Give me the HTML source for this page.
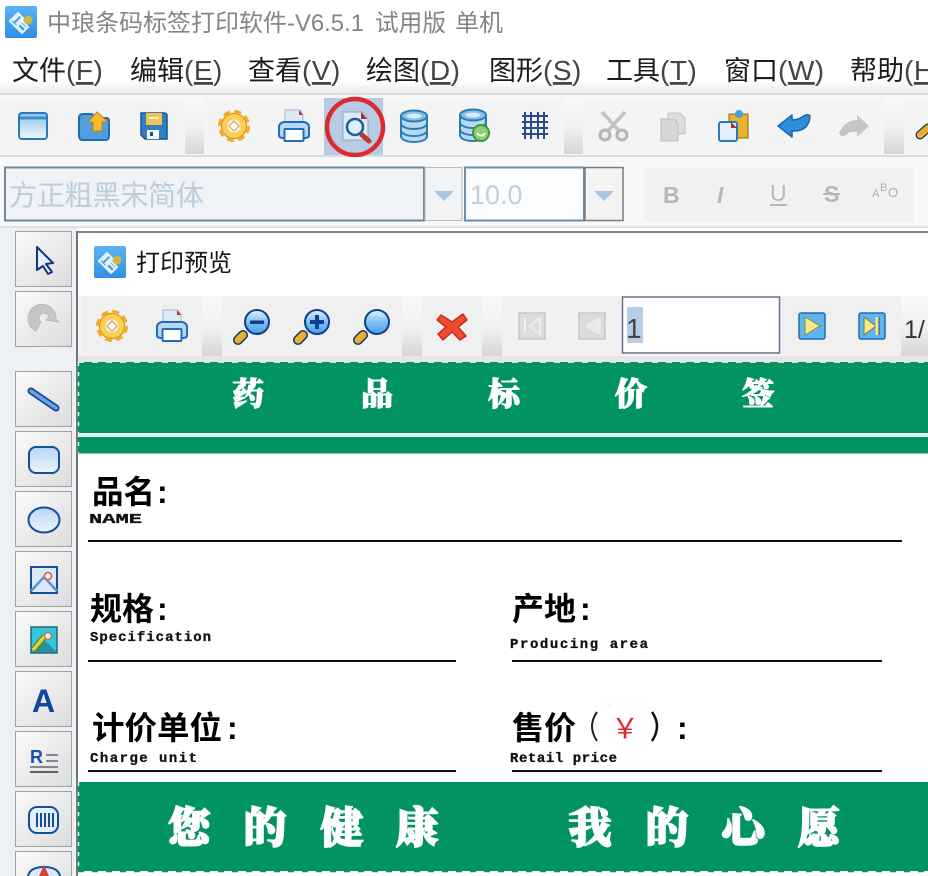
<!DOCTYPE html>
<html lang="zh">
<head>
<meta charset="utf-8">
<title>中琅条码标签打印软件</title>
<style>
html,body{margin:0;padding:0;background:#fff;width:928px;height:876px;overflow:hidden}
svg{display:block}
text{font-family:"Liberation Sans","Noto Sans CJK SC",sans-serif}
.ser{font-family:"Liberation Serif","Noto Serif CJK SC",serif;font-weight:900}
.lab{font-family:"Liberation Sans","Noto Sans CJK SC",sans-serif;font-weight:700;font-size:32px;fill:#000}
.en{font-family:"Liberation Mono",monospace;font-weight:700;font-size:14px;fill:#111;stroke:#111;stroke-width:.3px}
.menu{font-size:27px;fill:#1c1c1c}
.par{font-size:28px;fill:#444;letter-spacing:.5px}
.ttl{font-size:24px;fill:#858585}
.hd{font-size:32px;fill:#fff;stroke:#fff;stroke-width:1.100px;text-anchor:middle}
.ft{font-size:43px;fill:#fff;stroke:#fff;stroke-width:1.600px;text-anchor:middle}
.sans{font-family:"Liberation Sans",sans-serif;font-weight:700}
</style>
</head>
<body>
<svg width="928" height="876" viewBox="0 0 928 876" xmlns="http://www.w3.org/2000/svg">
<defs>
<linearGradient id="menuG" x1="0" y1="0" x2="0" y2="1"><stop offset="0" stop-color="#fff"/><stop offset=".75" stop-color="#fff"/><stop offset="1" stop-color="#e9e9e9"/></linearGradient>
<linearGradient id="gapG" x1="0" y1="0" x2="0" y2="1"><stop offset="0" stop-color="#f8f8f9"/><stop offset=".55" stop-color="#f0f0f1"/><stop offset="1" stop-color="#d6d6d8"/></linearGradient>
<linearGradient id="btnG" x1="0" y1="0" x2="1" y2="1"><stop offset="0" stop-color="#fafafa"/><stop offset="1" stop-color="#dcdcdc"/></linearGradient>
<linearGradient id="blueG" x1="0" y1="0" x2="0" y2="1"><stop offset="0" stop-color="#8cc4ee"/><stop offset="1" stop-color="#f2f8fd"/></linearGradient>
<linearGradient id="lensG" x1="0" y1="0" x2="0" y2="1"><stop offset="0" stop-color="#e4f3fd"/><stop offset=".5" stop-color="#7fc0f0"/><stop offset="1" stop-color="#4a9fe6"/></linearGradient>
<linearGradient id="blue2" x1="0" y1="0" x2="0" y2="1"><stop offset="0" stop-color="#b9d6f4"/><stop offset="1" stop-color="#edf5fc"/></linearGradient>
<linearGradient id="logoG" x1="0" y1="0" x2="0" y2="1"><stop offset="0" stop-color="#5ab3f2"/><stop offset="1" stop-color="#2f8fe3"/></linearGradient>

<g id="logo">
<rect width="32" height="32" rx="2" fill="url(#logoG)"/>
<g fill="none" stroke="#e8f3fc" stroke-width="2">
<path d="M5 15 L13 7 L19 13 L11 21 Z"/><path d="M9 19 L17 27 L23 21 L15 13"/><path d="M8 15 L14 9 M11 18 L17 12 M12 20 L18 26 M15 17 L21 23"/>
</g>
<circle cx="23" cy="14" r="4.500" fill="#c9b84c"/>
</g>

<g id="gear">
<circle r="13" fill="none" stroke="#f0a92a" stroke-width="6" stroke-dasharray="6.200 4"/>
<circle r="10" fill="none" stroke="#f9cf55" stroke-width="7"/>
<circle r="12.500" fill="none" stroke="#d98e1c" stroke-width="1"/>
<path d="M0 -5 L5 0 L0 5 L-5 0 Z" fill="#fff" stroke="#e09a22" stroke-width="1"/>
</g>

<g id="printer">
<path d="M-9 -3 V-17 H6 L9 -13 V-3 Z" fill="#dfe9f5" stroke="#9db9d8" stroke-width="1"/>
<path d="M5 -17 L9 -12 H5 Z" fill="#b8322c"/>
<path d="M-15 8 V0 Q-15 -4 -10 -5 H10 Q15 -4 15 0 V8 Q15 11 11 11 H-11 Q-15 11 -15 8 Z" fill="#bcd8f1" stroke="#1d6fbe" stroke-width="2"/>
<rect x="-9.500" y="2" width="19" height="12" rx="1" fill="#fff" stroke="#1d6fbe" stroke-width="2"/>
</g>

<g id="mag">
<path d="M-8 9 L-13 14" stroke="#17335f" stroke-width="10" stroke-linecap="round"/>
<path d="M-8 9 L-13 14" stroke="#e8b02c" stroke-width="7" stroke-linecap="round"/>
<circle cx="6" cy="-4" r="12" fill="url(#lensG)" stroke="#0f3f92" stroke-width="2"/>
</g>

<g id="db">
<path d="M-13 -10 V10 C-13 18 13 18 13 10 V-10 Z" fill="#b6daf2" stroke="#2c7db4" stroke-width="2"/>
<path d="M-13 -3 C-13 5 13 5 13 -3 M-13 4 C-13 12 13 12 13 4" fill="none" stroke="#2c7db4" stroke-width="2"/>
<ellipse cy="-10" rx="13" ry="5.500" fill="#7fc0e8" stroke="#2c7db4" stroke-width="2"/>
<ellipse cy="-10" rx="7.500" ry="2.500" fill="#d6edf9"/>
</g>

<g id="btn">
<rect x=".5" y=".5" width="56" height="55" fill="url(#btnG)" stroke="#a2a2a2"/>
</g>
</defs>

<!-- page base -->
<rect width="928" height="876" fill="#fff"/>

<!-- title bar -->
<use href="#logo" transform="translate(5,6)"/>
<text x="47" y="31" class="ttl" textLength="240" lengthAdjust="spacingAndGlyphs">中琅条码标签打印软件</text>
<text x="287" y="31" class="ttl" textLength="77" lengthAdjust="spacingAndGlyphs">-V6.5.1</text>
<text x="375" y="31" class="ttl" textLength="71" lengthAdjust="spacingAndGlyphs">试用版</text>
<text x="455" y="31" class="ttl" textLength="48" lengthAdjust="spacingAndGlyphs">单机</text>

<!-- menu -->
<rect y="45" width="928" height="48" fill="url(#menuG)"/>
<text x="12" y="80" class="menu">文件<tspan class="par">(<tspan text-decoration="underline">F</tspan>)</tspan></text>
<text x="130" y="80" class="menu">编辑<tspan class="par">(<tspan text-decoration="underline">E</tspan>)</tspan></text>
<text x="248" y="80" class="menu">查看<tspan class="par">(<tspan text-decoration="underline">V</tspan>)</tspan></text>
<text x="366" y="80" class="menu">绘图<tspan class="par">(<tspan text-decoration="underline">D</tspan>)</tspan></text>
<text x="489" y="80" class="menu">图形<tspan class="par">(<tspan text-decoration="underline">S</tspan>)</tspan></text>
<text x="606" y="80" class="menu">工具<tspan class="par">(<tspan text-decoration="underline">T</tspan>)</tspan></text>
<text x="724" y="80" class="menu">窗口<tspan class="par">(<tspan text-decoration="underline">W</tspan>)</tspan></text>
<text x="850" y="80" class="menu">帮助<tspan class="par">(<tspan text-decoration="underline">H</tspan>)</tspan></text>

<!-- toolbar 1 -->
<rect y="93" width="928" height="2" fill="#dcdcdc"/>
<rect y="95" width="928" height="64" fill="#f7f7f8"/>
<rect y="98" width="185" height="56" fill="#f4f4f5"/>
<rect x="185" y="98" width="19" height="56" fill="url(#gapG)"/>
<rect x="204" y="98" width="360" height="56" fill="#f4f4f5"/>
<rect x="564" y="98" width="19" height="56" fill="url(#gapG)"/>
<rect x="583" y="98" width="301" height="56" fill="#f4f4f5"/>
<rect x="884" y="98" width="20" height="56" fill="url(#gapG)"/>
<rect x="904" y="98" width="24" height="56" fill="#f4f4f5"/>
<rect y="155" width="928" height="2" fill="#dcdcdc"/>

<!-- new -->
<rect x="19" y="113" width="28" height="26" rx="3" fill="url(#blueG)" stroke="#2a78bd" stroke-width="2"/>
<path d="M20 118 H46" stroke="#3b8fd0" stroke-width="3"/>
<!-- open -->
<path d="M79 136 V118 Q79 114 83 114 H92 L96 118 H106 Q109 118 109 121 V136 Q109 140 105 140 H83 Q79 140 79 136 Z" fill="#4e9fdc" stroke="#1f6cb0" stroke-width="2"/>
<path d="M97 112 L88 122 H93 V131 H102 V122 H108 Z" fill="#f8b92a" stroke="#c88412" stroke-width="1"/>
<!-- save -->
<path d="M141 113 H164 Q167 113 167 116 V139 H145 L141 135 Z" fill="#2f7fc4" stroke="#17538e" stroke-width="1.500"/>
<rect x="146" y="113" width="16" height="12" fill="#f3c052"/>
<path d="M149 118 H159" stroke="#fff" stroke-width="1.500"/>
<rect x="147" y="130" width="12" height="9" fill="#f6f8fb"/>
<rect x="150" y="132" width="3" height="4" fill="#17538e"/>

<use href="#gear" transform="translate(234,126)"/>
<use href="#printer" transform="translate(294,127)"/>

<!-- preview highlighted -->
<rect x="324" y="98" width="59" height="57" fill="#b7cbe2"/>
<path d="M343 112 H362 L368 119 V140 H343 Z" fill="#dfe9f5" stroke="#8aa6c6" stroke-width="1"/>
<path d="M361 112 L367 119 H361 Z" fill="#a8302c"/>
<path d="M362 135 L369 141" stroke="#c0392b" stroke-width="5" stroke-linecap="round"/>
<circle cx="355" cy="127" r="8" fill="#dff0fb" stroke="#14609f" stroke-width="2.500"/>
<circle cx="355" cy="127" r="28" fill="none" stroke="#dd2a2f" stroke-width="4.500"/>

<use href="#db" transform="translate(414,126)"/>
<use href="#db" transform="translate(473,125)"/>
<circle cx="481" cy="133" r="8" fill="#8fd07a" stroke="#3a9a3a" stroke-width="2"/>
<path d="M477 133 A4.500 4.500 0 0 0 485 133" fill="none" stroke="#fff" stroke-width="1.800"/>

<!-- grid -->
<path d="M522 116 H548 M522 122 H548 M522 128 H548 M522 134 H548 M525 112 V139 M531 112 V139 M538 112 V139 M544 112 V139" stroke="#2b4c8c" stroke-width="2" fill="none"/>

<!-- cut -->
<path d="M602 112 L621 133 M625 112 L606 133" stroke="#c2c2c2" stroke-width="3.500" fill="none"/>
<circle cx="605" cy="135" r="5" fill="#eee" stroke="#b5b5b5" stroke-width="3"/>
<circle cx="622" cy="135" r="5" fill="#eee" stroke="#b5b5b5" stroke-width="3"/>
<!-- copy -->
<path d="M668 113 H680 L685 118 V134 H668 Z" fill="#dcdcdc" stroke="#c4c4c4"/>
<path d="M661 119 H674 L678 123 V141 H661 Z" fill="#d6d6d6" stroke="#bebebe"/>
<!-- paste -->
<rect x="729" y="114" width="19" height="24" fill="#e9b22c" stroke="#8a6a16"/>
<circle cx="739" cy="114" r="4" fill="#4a9fdc"/>
<rect x="719" y="122" width="18" height="19" rx="2" fill="#e3effa" stroke="#2a78bd" stroke-width="2"/>
<path d="M731 122 L737 128 H731 Z" fill="#a8302c"/>
<!-- undo -->
<path d="M778 126 L792 115 V120 Q798 120 802 117 Q808 113 810 116 Q809 131 794 131 H792 V137 Z" fill="#2c8fdb" stroke="#1b65ab" stroke-width="1.500" stroke-linejoin="round"/>
<!-- redo -->
<path d="M869 126 L857 115 V120 Q845 120 839 133 Q841 138 846 135 Q850 131 857 132 V137 Z" fill="#c6c6c6"/>
<!-- partial -->
<path d="M928 128 L920 135" stroke="#17335f" stroke-width="9" stroke-linecap="round"/>
<path d="M928 128 L920 135" stroke="#e8b02c" stroke-width="6.500" stroke-linecap="round"/>

<!-- toolbar 2 -->
<rect y="157" width="928" height="70" fill="#f7f8fa"/>
<rect x="5" y="167.500" width="419" height="53" fill="#eff2f6" stroke="#708a9e" stroke-width="2"/>
<rect x="425" y="167.500" width="37" height="53" fill="#f2f3f5" stroke="#b8bcc0" stroke-width="1"/>
<path d="M434 191 H454 L444 201 Z" fill="#a9c6e4"/>
<text x="9" y="205" font-size="28" fill="#bccede" textLength="195">方正粗黑宋简体</text>

<rect x="465" y="167.500" width="119" height="53" fill="#fbfcfe" stroke="#6f8fa8" stroke-width="2"/>
<rect x="585" y="167.500" width="38" height="53" fill="#f4f4f5" stroke="#7c7c7c" stroke-width="1.500"/>
<path d="M594 191 H614 L604 201 Z" fill="#a9c6e4"/>
<text x="470" y="204" font-size="27" fill="#c2d0de">10.0</text>

<rect x="644" y="168" width="269" height="54" fill="#f1f1f3"/>
<text x="663" y="203" font-size="23" font-weight="700" fill="#b8b8b8">B</text>
<text x="717" y="203" font-size="23" font-weight="700" font-style="italic" fill="#b8b8b8" class="sans">I</text>
<text x="770" y="201" font-size="23" fill="#b8b8b8">U</text>
<rect x="770" y="204" width="17" height="2" fill="#b8b8b8"/>
<text x="824" y="202" font-size="23" font-weight="700" fill="#b8b8b8">S</text>
<rect x="823" y="193" width="17" height="2" fill="#b8b8b8"/>
<text x="872" y="197" font-size="11" fill="#b0b0b0">A</text><text x="880" y="191" font-size="11" fill="#b0b0b0">B</text><text x="888" y="197" font-size="13" fill="#b0b0b0">O</text>

<rect y="226" width="928" height="2" fill="#dfe1e4"/>

<!-- left toolbar -->
<rect y="228" width="77" height="648" fill="#edf0f4"/>
<use href="#btn" transform="translate(15,231)"/>
<use href="#btn" transform="translate(15,291)"/>
<use href="#btn" transform="translate(15,371)"/>
<use href="#btn" transform="translate(15,431)"/>
<use href="#btn" transform="translate(15,491)"/>
<use href="#btn" transform="translate(15,551)"/>
<use href="#btn" transform="translate(15,611)"/>
<use href="#btn" transform="translate(15,671)"/>
<use href="#btn" transform="translate(15,731)"/>
<use href="#btn" transform="translate(15,791)"/>
<use href="#btn" transform="translate(15,851)"/>

<!-- cursor -->
<path d="M37 247 L53 263 L46 264 L52 272 L48 274 L43 266 L37 270 Z" fill="#e4f0fb" stroke="#12357f" stroke-width="2" stroke-linejoin="round"/>
<!-- rotate -->
<path d="M56 319 A14 14 0 1 0 36 331 L41 322 A5 5 0 1 1 49 317 L46 320 L59 322 Z" fill="#c6c6c6" stroke="#bbb"/>
<!-- line -->
<path d="M31 391 L56 408" stroke="#12489a" stroke-width="7" stroke-linecap="round"/>
<path d="M31 391 L56 408" stroke="#6fa0e6" stroke-width="3.500" stroke-linecap="round"/>
<!-- rounded rect -->
<rect x="29" y="447" width="30" height="26" rx="7" fill="url(#blue2)" stroke="#124f9c" stroke-width="2"/>
<!-- ellipse -->
<ellipse cx="44" cy="520" rx="15.500" ry="12.500" fill="url(#blue2)" stroke="#124f9c" stroke-width="2"/>
<!-- image -->
<rect x="31" y="567" width="26" height="26" fill="#dbe9f8" stroke="#124f9c" stroke-width="2"/>
<path d="M31 591 L44 577 L57 591" fill="none" stroke="#5f93d4" stroke-width="2.500"/>
<circle cx="48" cy="576" r="3.500" fill="#fff" stroke="#e0605c" stroke-width="1.800"/>
<!-- colour image -->
<rect x="31" y="627" width="26" height="26" fill="#35c7d8" stroke="#1b6a7c" stroke-width="1.500"/>
<path d="M44 640 L57 652 H32 Z" fill="#2a8f9c"/>
<path d="M33 650 L45 636" stroke="#5d8a1e" stroke-width="6"/>
<path d="M33 650 L45 636" stroke="#e5d43a" stroke-width="3.500"/>
<circle cx="48" cy="636" r="3.500" fill="#eee" stroke="#b77a55" stroke-width="1.500"/>
<!-- A -->
<text x="32" y="712" font-size="32" fill="#1247a0" class="sans">A</text>
<!-- R= -->
<text x="30" y="763" font-size="18" fill="#1e4fa6" class="sans">R</text>
<path d="M46 755 H58 M46 761 H58 M30 767 H58" stroke="#667" stroke-width="1.500"/>
<path d="M30 772 H58" stroke="#334" stroke-width="1.500"/>
<!-- barcode -->
<rect x="29" y="807" width="29" height="26" rx="8" fill="#e6f0fb" stroke="#124f9c" stroke-width="2"/>
<path d="M37 813 V827 M41 813 V827 M45 813 V827 M49 813 V827 M53 813 V827" stroke="#124f9c" stroke-width="2"/>
<!-- partial shape -->
<path d="M28 876 Q30 867 44 867 Q58 867 60 876" fill="#dce9f7" stroke="#124f9c" stroke-width="2"/>
<path d="M44 865 L39 876 H49 Z" fill="#d64040"/>

<!-- preview window -->
<rect x="77" y="233" width="851" height="643" fill="#fff"/>
<rect x="76" y="231" width="852" height="2" fill="#7f8287"/>
<rect x="76" y="231" width="2" height="645" fill="#71757c"/>
<use href="#logo" transform="translate(94,246)"/>
<text x="136" y="271" font-size="24" fill="#151515" textLength="96" lengthAdjust="spacingAndGlyphs">打印预览</text>

<!-- preview toolbar -->
<rect x="78" y="296" width="850" height="66" fill="#f4f4f5"/>
<rect x="202" y="296" width="20" height="60" fill="url(#gapG)"/>
<rect x="402" y="296" width="20" height="60" fill="url(#gapG)"/>
<rect x="482" y="296" width="20" height="60" fill="url(#gapG)"/>
<rect x="901" y="296" width="27" height="60" fill="url(#gapG)"/>
<rect x="82" y="296" width="120" height="60" fill="#f0f0f0"/>
<rect x="222" y="296" width="180" height="60" fill="#f0f0f0"/>
<rect x="422" y="296" width="60" height="60" fill="#f0f0f0"/>
<rect x="502" y="296" width="120" height="60" fill="#f0f0f0"/>
<rect x="780" y="296" width="121" height="60" fill="#f0f0f0"/>
<rect x="78" y="356" width="850" height="6" fill="#e6e6e6"/>

<use href="#gear" transform="translate(112,326)"/>
<use href="#printer" transform="translate(172,327)"/>
<use href="#mag" transform="translate(251,326)"/>
<rect x="250" y="320.500" width="14" height="3.500" fill="#0f3f92"/>
<use href="#mag" transform="translate(311,326)"/>
<path d="M310 322 H324 M317 315 V329" stroke="#0f3f92" stroke-width="4"/>
<use href="#mag" transform="translate(371,326)"/>
<!-- X -->
<path d="M441 315 L452 322 L463 314 L467 320 L458 327 L466 336 L460 340 L452 332 L443 340 L438 334 L446 327 L437 320 Z" fill="#ee4b30" stroke="#c92c1c" stroke-width="1.500" stroke-linejoin="round"/>

<!-- disabled nav -->
<rect x="519" y="313" width="26" height="26" fill="#dcdcdc" stroke="#c9c9c9" stroke-width="1.500"/>
<path d="M525 318 V334 M540 318 L530 326 L540 334 Z" fill="none" stroke="#eee" stroke-width="2"/>
<rect x="579" y="313" width="26" height="26" fill="#dcdcdc" stroke="#c9c9c9" stroke-width="1.500"/>
<path d="M600 318 L586 326 L600 334 Z" fill="#e8e8e8" stroke="#f2f2f2"/>

<!-- page input -->
<rect x="622.500" y="297" width="157" height="56" fill="#fff" stroke="#6c6f8c" stroke-width="1.500"/>
<rect x="627" y="307" width="16" height="36" fill="#b6cde6"/>
<text x="626" y="338" font-size="28" fill="#444">1</text>

<!-- active nav -->
<rect x="799" y="313" width="26" height="26" rx="2" fill="#5fb5ec" stroke="#1f6cb0" stroke-width="1.500"/>
<path d="M805 317 L820 326 L805 335 Z" fill="#f7e98a" stroke="#8a8a4a"/>
<rect x="859" y="313" width="26" height="26" rx="2" fill="#5fb5ec" stroke="#1f6cb0" stroke-width="1.500"/>
<path d="M864 317 L876 326 L864 335 Z" fill="#f7e98a" stroke="#77773a"/>
<path d="M877 317 V335" stroke="#f7e98a" stroke-width="3"/>
<path d="M879 317 V335" stroke="#2a4c70" stroke-width="1"/>
<text x="904" y="338" font-size="25" fill="#333">1/</text>

<!-- green header -->
<rect x="78" y="362" width="850" height="71" fill="#029362"/>
<rect x="78" y="433" width="850" height="3.500" fill="#ddf5ea"/>
<rect x="78" y="437" width="850" height="16.500" fill="#029362"/>
<path d="M78 362.500 H928" stroke="#fff" stroke-width="1" stroke-dasharray="6 8" opacity=".8"/>
<path d="M78.500 362 V453" stroke="#fff" stroke-width="1.500" stroke-dasharray="4 6" opacity=".85"/>
<text x="248" y="405" class="ser hd">药</text>
<text x="377" y="405" class="ser hd">品</text>
<text x="504" y="405" class="ser hd">标</text>
<text x="631" y="405" class="ser hd">价</text>
<text x="758" y="405" class="ser hd">签</text>

<!-- label body -->
<text x="92" y="503" class="lab" textLength="63" lengthAdjust="spacingAndGlyphs">品名</text>
<text x="157" y="503" class="lab" font-size="28">:</text>
<text x="89" y="523" class="en" textLength="53" lengthAdjust="spacingAndGlyphs">NAME</text>
<rect x="88" y="540" width="814" height="2" fill="#111"/>

<text x="90" y="620" class="lab" textLength="64" lengthAdjust="spacingAndGlyphs">规格</text>
<text x="157" y="620" class="lab" font-size="28">:</text>
<text x="90" y="641" class="en" textLength="121">Specification</text>
<rect x="88" y="660" width="368" height="2" fill="#111"/>

<text x="512" y="620" class="lab" textLength="64" lengthAdjust="spacingAndGlyphs">产地</text>
<text x="580" y="620" class="lab" font-size="28">:</text>
<text x="510" y="648" class="en" textLength="138">Producing area</text>
<rect x="512" y="660" width="370" height="2" fill="#111"/>

<text x="92" y="739" class="lab" textLength="130" lengthAdjust="spacingAndGlyphs">计价单位</text>
<text x="227" y="739" class="lab" font-size="28">:</text>
<text x="90" y="762" class="en" textLength="107">Charge unit</text>
<rect x="88" y="770" width="368" height="2" fill="#111"/>

<text x="512" y="739" class="lab" textLength="64" lengthAdjust="spacingAndGlyphs">售价</text>
<path d="M597 712 Q587 726 597 741" fill="none" stroke="#222" stroke-width="2"/>
<text x="625" y="738" font-size="28" fill="#e3262b" text-anchor="middle">￥</text>
<path d="M652 712 Q662 726 652 741" fill="none" stroke="#111" stroke-width="2.500"/>
<text x="677" y="739" class="lab" font-size="28">:</text>
<text x="510" y="762" class="en" textLength="107">Retail price</text>
<rect x="512" y="770" width="370" height="2" fill="#111"/>

<!-- green footer -->
<rect x="78" y="782" width="850" height="89" fill="#029362"/>
<path d="M78.500 782 V871" stroke="#fff" stroke-width="1.500" stroke-dasharray="4 6" opacity=".85"/>
<path d="M78 871.500 H928" stroke="#029362" stroke-width="1.500" stroke-dasharray="6 8"/>
<text x="189" y="843" class="ser ft">您</text>
<text x="265" y="843" class="ser ft">的</text>
<text x="342" y="843" class="ser ft">健</text>
<text x="417" y="843" class="ser ft">康</text>
<text x="590" y="843" class="ser ft">我</text>
<text x="667" y="843" class="ser ft">的</text>
<text x="743" y="843" class="ser ft">心</text>
<text x="819" y="843" class="ser ft">愿</text>
</svg>
</body>
</html>
